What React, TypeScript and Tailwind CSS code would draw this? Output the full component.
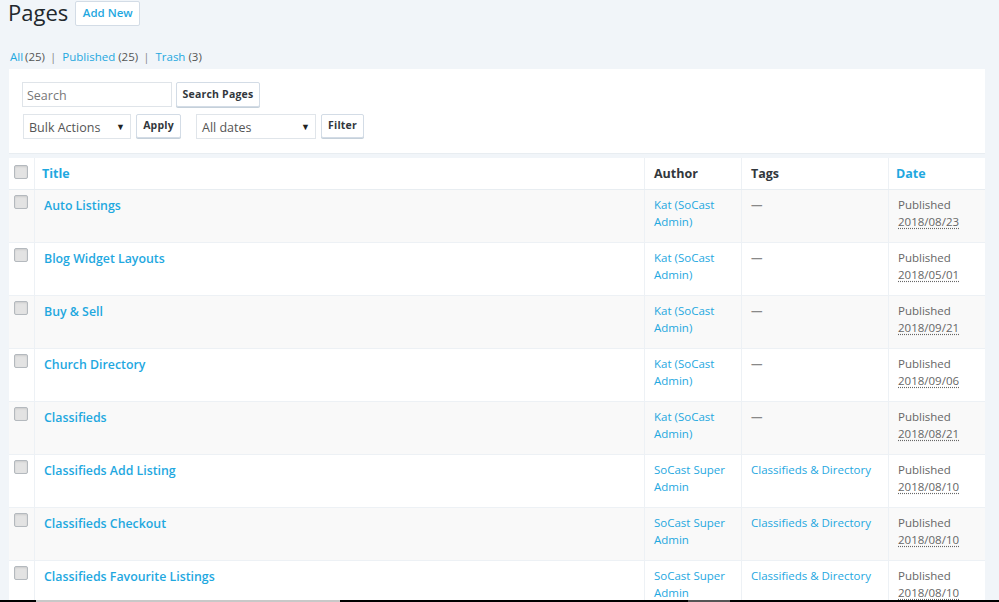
const kat = "Kat (SoCast Admin)";
const sup = "SoCast Super Admin";
const cd = "Classifieds & Directory";
const rows = [
  ["Auto Listings", kat, "", "2018/08/23"],
  ["Blog Widget Layouts", kat, "", "2018/05/01"],
  ["Buy & Sell", kat, "", "2018/09/21"],
  ["Church Directory", kat, "", "2018/09/06"],
  ["Classifieds", kat, "", "2018/08/21"],
  ["Classifieds Add Listing", sup, cd, "2018/08/10"],
  ["Classifieds Checkout", sup, cd, "2018/08/10"],
  ["Classifieds Favourite Listings", sup, cd, "2018/08/10"],
];

function Check() {
  return <div className="h-[14px] w-[14px] rounded-[2px] border border-[#b4b9be] bg-[#e3e3e3] shadow-[inset_0_1px_2px_rgba(0,0,0,0.1)]" />;
}

function Btn({ children, className = "" }: { children: string; className?: string }) {
  return (
    <div className={"flex h-[24px] items-center justify-center rounded-[2px] border border-[#d3dce6] bg-white text-[10.5px] font-bold tracking-[0.2px] text-[#32373c] shadow-[0_1px_0_#c5d0da] " + className}>
      {children}
    </div>
  );
}

function Select({ label, className = "" }: { label: string; className?: string }) {
  return (
    <div className={"flex h-[25px] items-center justify-between border border-[#e0e5ea] bg-white pl-[5px] pr-[5px] text-[12.5px] text-[#555] " + className}>
      <span className="pt-[3px]">{label}</span>
      <span className="text-[9px] text-[#222]">▼</span>
    </div>
  );
}

export default function App() {
  return (
    <div className="relative h-[602px] w-[999px] overflow-hidden bg-[#f1f5f9] font-['Open_Sans',sans-serif] text-[#555]">
      <div className="flex h-[48px] items-start pl-[8px]">
        <h1 className="mr-[7px] text-[22px] leading-[24px] text-[#23282d]">Pages</h1>
        <div className="mt-px flex h-[25px] w-[65px] items-center justify-center rounded-[2px] border border-[#d3dce6] bg-white pb-px text-[11.5px] font-semibold text-[#1fa8df]">Add New</div>
      </div>
      <div className="flex h-[19px] items-center pb-[2px] pl-[10px] text-[11.5px]">
        <span className="text-[#1fa8df]">All</span>
        <span className="ml-[2px]">(25)</span>
        <span className="mx-[5px] text-[#888]">|</span>
        <span className="ml-px text-[#1fa8df]">Published</span>
        <span className="ml-[3px]">(25)</span>
        <span className="mx-[5px] text-[#888]">|</span>
        <span className="ml-px text-[#1fa8df]">Trash</span>
        <span className="ml-[3px]">(3)</span>
      </div>
      <div className="ml-[9px] mt-[2px] h-[85px] w-[976px] border-b border-[#e8edf1] bg-white pl-[13px] pt-[13px]">
        <div className="flex items-start">
          <div className="flex h-[25px] w-[150px] items-center border border-[#dfe4e9] pl-[4px] pt-[3px] text-[12.5px] text-[#777]">Search</div>
          <Btn className="ml-[4px] h-[25px] w-[84px]">Search Pages</Btn>
        </div>
        <div className="mt-[7px] flex items-start pl-px">
          <Select label="Bulk Actions" className="w-[108px]" />
          <Btn className="ml-[5px] w-[45px]">Apply</Btn>
          <Select label="All dates" className="ml-[15px] w-[120px]" />
          <Btn className="ml-[5px] w-[43px]">Filter</Btn>
        </div>
      </div>
      <div className="ml-[9px] mt-[4px] w-[976px] bg-white">
        <div className="flex h-[32px] border-b border-[#e8edf1]">
          <div className="w-[26px] border-r border-[#edf1f5] pl-[5px] pt-[7px]"><Check /></div>
          <div className="w-[610px] border-r border-[#edf1f5] pl-[7px] pt-[7px] text-[12.5px] font-bold text-[#1fa8df]">Title</div>
          <div className="w-[97px] border-r border-[#edf1f5] pl-[9px] pt-[7px] text-[12.5px] font-bold text-[#32373c]">Author</div>
          <div className="w-[147px] border-r border-[#edf1f5] pl-[9px] pt-[7px] text-[12.5px] font-bold text-[#32373c]">Tags</div>
          <div className="flex-1 pl-[7px] pt-[7px] text-[12.5px] font-bold text-[#1fa8df]">Date</div>
        </div>
        {rows.map((r, i) => (
          <div key={r[0]} className={"flex h-[53px] border-b border-[#edf1f5] " + (i % 2 === 0 ? "bg-[#f9f9f9]" : "bg-white")}>
            <div className="w-[26px] border-r border-[#edf1f5] pl-[5px] pt-[5px]"><Check /></div>
            <div className="w-[610px] border-r border-[#edf1f5] pl-[9px] pt-[7px] text-[12.35px] font-semibold text-[#1fa8df]">{r[0]}</div>
            <div className="w-[97px] border-r border-[#edf1f5] pl-[9px] pr-[8px] pt-[6px] text-[11.5px] leading-[17px] text-[#1fa8df]">{r[1]}</div>
            <div className="w-[147px] border-r border-[#edf1f5] pl-[9px] pt-[6px] text-[11.5px] leading-[17px] text-[#1fa8df]">
              {r[2] || <span className="font-bold text-[#888]">—</span>}
            </div>
            <div className="flex-1 pl-[9px] pt-[6px] text-[11.5px] leading-[17px] text-[#666]">
              <div>Published</div>
              <div className="underline decoration-dotted underline-offset-2">{r[3]}</div>
            </div>
          </div>
        ))}
      </div>
      <div className="absolute bottom-0 left-0 flex h-[2px] w-full bg-black">
        <div className="ml-[36px] w-[304px] bg-[#c8c8c8]" />
        <div className="ml-[348px] w-[42px] bg-[#555]" />
      </div>
    </div>
  );
}
